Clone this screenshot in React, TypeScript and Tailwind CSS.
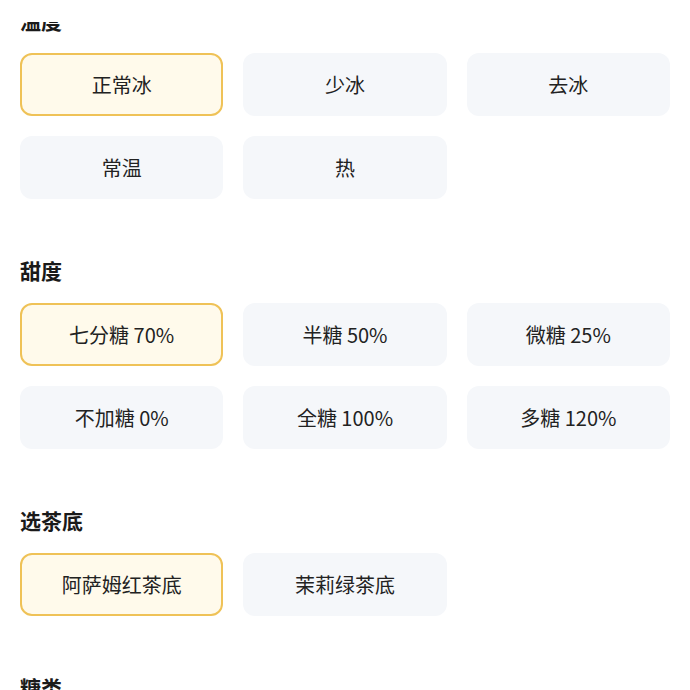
import React from 'react';

interface Group {
  title: string;
  options: string[];
  selected: number;
}

const groups: Group[] = [
  { title: '温度', options: ['正常冰', '少冰', '去冰', '常温', '热'], selected: 0 },
  {
    title: '甜度',
    options: ['七分糖 70%', '半糖 50%', '微糖 25%', '不加糖 0%', '全糖 100%', '多糖 120%'],
    selected: 0,
  },
  { title: '选茶底', options: ['阿萨姆红茶底', '茉莉绿茶底'], selected: 0 },
  { title: '糖类', options: [], selected: 0 },
];

function OptionGroup({ group }: { group: Group }) {
  return (
    <section>
      <h3 className="text-[21px] leading-[28px] font-semibold text-[#1a1a1a] mb-[19px]">{group.title}</h3>
      {group.options.length > 0 && (
        <div className="grid grid-cols-3 gap-5">
          {group.options.map((opt, i) => (
            <button
              key={opt}
              className={
                i === group.selected
                  ? 'h-[63px] rounded-xl border-2 border-[#efc257] bg-[#fffaeb] text-[20px] text-[#222]'
                  : 'h-[63px] rounded-xl border-2 border-transparent bg-[#f5f7fa] text-[20px] text-[#222]'
              }
            >
              {opt}
            </button>
          ))}
        </div>
      )}
    </section>
  );
}

export default function App() {
  return (
    <div
      className="relative h-[690px] overflow-hidden bg-white"
      style={{ fontFamily: '"Noto Sans CJK SC", "Noto Sans", sans-serif' }}
    >
      <div className="flex flex-col gap-[57px] px-5 pt-[6px]">
        {groups.map((g) => (
          <OptionGroup key={g.title} group={g} />
        ))}
      </div>
      {/* sticky header edge covering the first title */}
      <div className="absolute inset-x-0 top-0 h-[22px] bg-white" />
    </div>
  );
}
